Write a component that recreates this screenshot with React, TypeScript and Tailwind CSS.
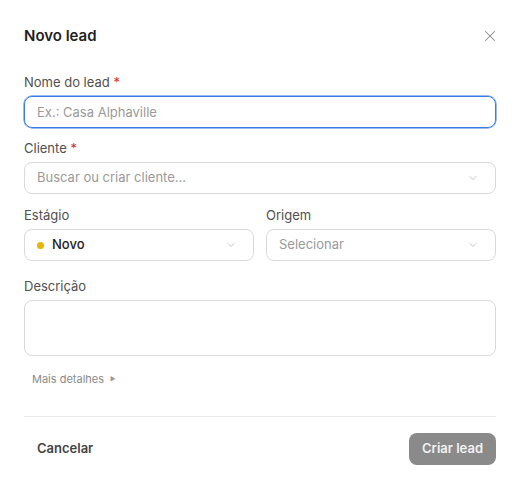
import { X, ChevronDown } from 'lucide-react';

const font = { fontFamily: 'Inter, "Noto Sans", sans-serif' };

function Label({ text, required, className = '' }: { text: string; required?: boolean; className?: string }) {
  return (
    <label className={`block text-[13px] leading-[18px] text-[#505050] ${className}`}>
      {text}
      {required && <span className="text-[#d22f2f]"> *</span>}
    </label>
  );
}

function SelectBox({ children }: { children: React.ReactNode }) {
  return (
    <div className="flex h-8 items-center justify-between rounded-lg border border-[#d9d9d9] bg-white pl-3 pr-4 text-[13px]">
      <div className="flex min-w-0 items-center gap-2">{children}</div>
      <ChevronDown className="h-3 w-3 text-[#b0b0b0]" strokeWidth={1.5} />
    </div>
  );
}

export default function App() {
  return (
    <div className="min-h-screen bg-white" style={font}>
      <div className="w-[520px] px-6 pt-[25px] pb-6">
        {/* header */}
        <div className="flex items-center justify-between">
          <h2 className="text-[15px] leading-[22px] font-semibold text-[#222]">Novo lead</h2>
          <button type="button" className="-mr-[3px] text-[#8a8a8a]">
            <X className="h-[18px] w-[18px]" strokeWidth={1.4} />
          </button>
        </div>

        {/* nome */}
        <Label text="Nome do lead" required className="mt-[26px]" />
        <input
          type="text"
          placeholder="Ex.: Casa Alphaville"
          className="mt-[5px] block h-8 w-full rounded-lg border border-[#3b7be8] px-3 text-[13px] text-[#222] placeholder:text-[#9a9a9a] outline-none ring-[0.5px] ring-[#3b7be8]"
        />

        {/* cliente */}
        <Label text="Cliente" required className="mt-[11px]" />
        <div className="mt-[5px]">
          <SelectBox>
            <span className="text-[#9a9a9a]">Buscar ou criar cliente...</span>
          </SelectBox>
        </div>

        {/* estagio / origem */}
        <div className="mt-[12px] grid grid-cols-2 gap-3">
          <div>
            <Label text="Estágio" />
            <div className="mt-[5px]">
              <SelectBox>
                <span className="h-[7px] w-[7px] rounded-full bg-[#eab308]" />
                <span className="font-medium text-[#222]">Novo</span>
              </SelectBox>
            </div>
          </div>
          <div>
            <Label text="Origem" />
            <div className="mt-[5px]">
              <SelectBox>
                <span className="text-[#9a9a9a]">Selecionar</span>
              </SelectBox>
            </div>
          </div>
        </div>

        {/* descricao */}
        <Label text="Descrição" className="mt-[16px]" />
        <textarea className="mt-[5px] block h-14 w-full resize-none rounded-lg border border-[#d9d9d9] px-3 py-2 text-[13px] outline-none" />

        <button type="button" className="mt-[15px] flex items-center gap-[6px] px-2 text-[11px] leading-[16px] text-[#8a8a8a]">
          Mais detalhes
          <span className="text-[6px] leading-none text-[#999]">▶</span>
        </button>

        <div className="mt-[29px] border-t border-[#ececec]" />

        <div className="mt-4 flex items-center justify-between">
          <button type="button" className="h-8 rounded-lg px-[13px] text-[13px] font-semibold text-[#444]">
            Cancelar
          </button>
          <button type="button" className="h-8 rounded-lg bg-[#8a8a8a] px-[13px] text-[13px] font-semibold text-[#f2f2f2]">
            Criar lead
          </button>
        </div>
      </div>
    </div>
  );
}
